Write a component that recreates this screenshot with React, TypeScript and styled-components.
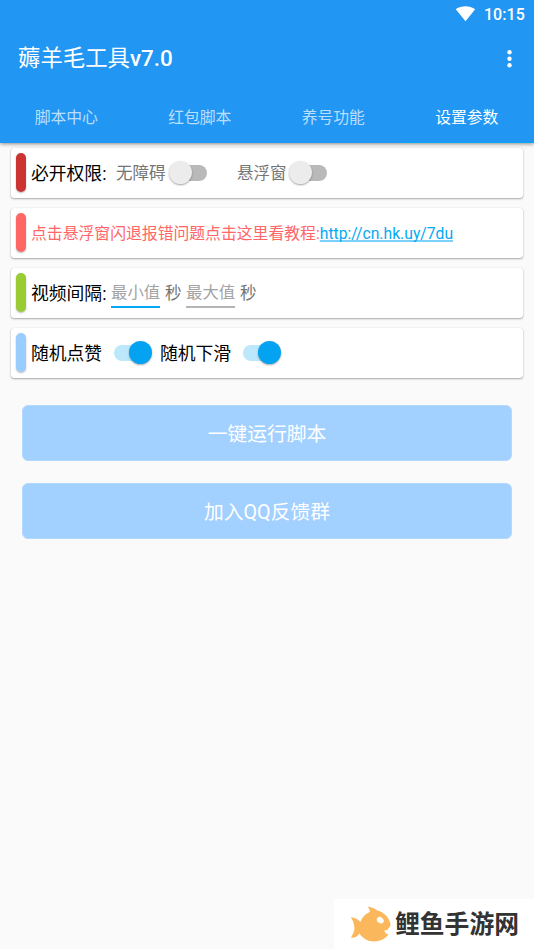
import React from 'react';
import styled, { createGlobalStyle } from 'styled-components';

const GlobalStyle = createGlobalStyle`
  *, *::before, *::after { box-sizing: border-box; }
  body {
    margin: 0;
    background: #fafafa;
    font-family: Roboto, "Noto Sans CJK SC", sans-serif;
  }
`;

const Screen = styled.div`
  position: relative;
  width: 534px;
  height: 949px;
  overflow: hidden;
  background: #fafafa;
`;

const Header = styled.header`
  position: relative;
  height: 143px;
  background: #2196f3;
  color: #fff;
  box-shadow: 0 1px 4px rgba(0, 0, 0, 0.45);
`;

const StatusBar = styled.div`
  display: flex;
  justify-content: flex-end;
  align-items: center;
  height: 27px;
  padding-right: 9px;
  gap: 8px;
`;

const Clock = styled.span`
  font-size: 16px;
  font-weight: 500;
  line-height: 20px;
  letter-spacing: 0.1px;
  padding-top: 2px;
`;

const Toolbar = styled.div`
  display: flex;
  justify-content: space-between;
  align-items: center;
  height: 63px;
  padding: 0 22px 0 18px;
`;

const Title = styled.h1`
  margin: 0;
  padding-bottom: 1px;
  font-size: 22.4px;
  font-weight: 500;
  line-height: 30px;
`;

const TitleText = styled.span`
  font-weight: 400;
`;

const TabBar = styled.nav`
  display: grid;
  grid-template-columns: repeat(4, 1fr);
  height: 53px;
`;

const Tab = styled.button<{ $active?: boolean }>`
  border: 0;
  border-bottom: 1px solid ${p => (p.$active ? '#03a9f4' : 'transparent')};
  padding: 3px 1px 0 0;
  background: none;
  font: 400 15.8px/24px Roboto, "Noto Sans CJK SC", sans-serif;
  color: ${p => (p.$active ? '#fff' : 'rgba(255, 255, 255, 0.7)')};
`;

const CardList = styled.main`
  display: flex;
  flex-direction: column;
  gap: 10px;
  padding: 5px 11px 0;
`;

const Card = styled.section`
  display: flex;
  align-items: center;
  height: 50px;
  padding-left: 5px;
  border-radius: 3px;
  background: #fff;
  box-shadow: 0 1px 2px rgba(0, 0, 0, 0.32), 0 0 1px rgba(0, 0, 0, 0.16);
`;

const Marker = styled.span<{ $color: string }>`
  width: 10px;
  height: 39px;
  margin: 0 5px 1px 0;
  border-radius: 5px;
  background: ${p => p.$color};
  box-shadow: 0 1px 2px rgba(0, 0, 0, 0.28);
`;

const Label = styled.span<{ $width: number }>`
  width: ${p => p.$width}px;
  padding-top: 1px;
  font-size: 17.8px;
  line-height: 27px;
  white-space: nowrap;
  color: #000;
`;

const Muted = styled.span<{ $width: number }>`
  width: ${p => p.$width}px;
  padding-top: 2px;
  font-size: 16.5px;
  line-height: 24px;
  white-space: nowrap;
  color: #757575;
`;

const Notice = styled.p`
  margin: 0;
  padding-top: 1px;
  font-size: 15.83px;
  line-height: 24px;
  white-space: nowrap;
  color: #ff6666;
`;

const NoticeLink = styled.a`
  color: #03a9f4;
  font-size: 15.7px;
  text-decoration: underline;
  text-decoration-color: #7dd0f7;
  text-decoration-thickness: 2px;
  text-underline-offset: 1px;
  text-decoration-skip-ink: none;
`;

const Track = styled.span<{ $on?: boolean; $gap: number }>`
  display: flex;
  align-items: center;
  justify-content: ${p => (p.$on ? 'flex-end' : 'flex-start')};
  width: 37px;
  height: 16px;
  margin: 0 ${p => p.$gap}px 1px 0;
  border-radius: 8px;
  background: ${p => (p.$on ? '#bde8fc' : '#b9b9b9')};
`;

const Thumb = styled.span<{ $on?: boolean }>`
  flex: none;
  width: 23px;
  height: 23px;
  margin: 0 ${p => (p.$on ? '-0.5px' : '-1px')};
  border-radius: 50%;
  background: ${p => (p.$on ? '#03a3f2' : '#ececec')};
  box-shadow: 0 1px 2px rgba(0, 0, 0, 0.35);
`;

const Field = styled.input<{ $focused?: boolean }>`
  width: 49px;
  height: 30px;
  margin: 0 5px 0 0;
  padding: 1px 0 0;
  border: 0;
  border-bottom: ${p => (p.$focused ? '2px solid #03a9f4' : '2px solid #b5b5b5')};
  outline: 0;
  background: none;
  font: 400 16.4px/25px Roboto, "Noto Sans CJK SC", sans-serif;
  &::placeholder { color: #a3a3a3; opacity: 1; }
`;

const Actions = styled.div`
  display: flex;
  flex-direction: column;
  gap: 22px;
  padding: 27px 22px 0;
`;

const ActionButton = styled.button`
  height: 56px;
  padding: 4px 0 0;
  border: 1px solid #b4d9ff;
  border-radius: 6px;
  background: #a2d0ff;
  color: #fff;
  font: 400 19.8px/28px Roboto, "Noto Sans CJK SC", sans-serif;
`;

const Watermark = styled.aside`
  position: absolute;
  right: 0;
  bottom: 0;
  display: flex;
  align-items: center;
  width: 200px;
  height: 50px;
  padding-left: 16px;
  gap: 3px;
  background: #fff;
`;

const Brand = styled.span`
  margin-top: -5px;
  font: 700 24.8px/36px "Noto Sans CJK SC", sans-serif;
  color: #333;
  white-space: nowrap;
`;

const WifiIcon = () => (
  <svg width="20" height="16" viewBox="0.5 0.5 20 16">
    <path d="M.3 3.7C5.9-.2 14.1-.2 19.7 3.7L10 15.7Z" fill="#fff" />
  </svg>
);

const MoreIcon = () => (
  <svg width="5" height="18" viewBox="0 0 5 18" fill="#fff">
    <circle cx="2.5" cy="2.2" r="2.2" />
    <circle cx="2.5" cy="8.7" r="2.2" />
    <circle cx="2.5" cy="15.2" r="2.2" />
  </svg>
);

const FishLogo = () => (
  <svg width="42" height="36" viewBox="0 0 42 36">
    <path
      d="M17.5.5C23 1.5 25 3 27.5 4.5C34 6 40 12 40.7 19.5L37 24.2L40 25.2C38 31.5 31 35.5 24 35.5C17.5 35.5 12.5 32 9.5 27.5C7.5 30.5 4.5 32 1 31.7C3 28 4.3 25.5 4.5 22C4 17 2.8 14 .8 11.2C5.5 11.5 8.5 13.7 10.4 16C12 11.5 15 8 20 5.7C19.8 4 19 2.3 17.5.5Z"
      fill="#fbb75c"
    />
    <path d="M41.2 22.8C39.5 24.3 37 24.5 34.3 24.2C34.8 27 37 28.6 39.3 28.2L42 24Z" fill="#fff" />
    <ellipse cx="30.3" cy="14.2" rx="3.7" ry="2.9" transform="rotate(38 30.3 14.2)" fill="#fff" />
  </svg>
);

const Switch = ({ on, gap = 0 }: { on?: boolean; gap?: number }) => (
  <Track $on={on} $gap={gap} role="switch" aria-checked={!!on}>
    <Thumb $on={on} />
  </Track>
);

const tabs = ['脚本中心', '红包脚本', '养号功能', '设置参数'];

export default function App() {
  return (
    <Screen>
      <GlobalStyle />
      <Header>
        <StatusBar>
          <WifiIcon />
          <Clock>10:15</Clock>
        </StatusBar>
        <Toolbar>
          <Title><TitleText>薅羊毛工具</TitleText>v7.0</Title>
          <MoreIcon />
        </Toolbar>
        <TabBar>
          {tabs.map(t => <Tab key={t} $active={t === '设置参数'}>{t}</Tab>)}
        </TabBar>
      </Header>
      <CardList>
        <Card>
          <Marker $color="#cc3333" />
          <Label $width={85}>必开权限:</Label>
          <Muted $width={54}>无障碍</Muted>
          <Switch gap={30} />
          <Muted $width={53}>悬浮窗</Muted>
          <Switch />
        </Card>
        <Card>
          <Marker $color="#ff6666" />
          <Notice>
            点击悬浮窗闪退报错问题点击这里看教程:<NoticeLink>http://cn.hk.uy/7du</NoticeLink>
          </Notice>
        </Card>
        <Card>
          <Marker $color="#99cc33" />
          <Label $width={80}>视频间隔:</Label>
          <Field $focused placeholder="最小值" />
          <Muted $width={21}>秒</Muted>
          <Field placeholder="最大值" />
          <Muted $width={21}>秒</Muted>
        </Card>
        <Card>
          <Marker $color="#99ccff" />
          <Label $width={83}>随机点赞</Label>
          <Switch on gap={9} />
          <Label $width={83}>随机下滑</Label>
          <Switch on />
        </Card>
      </CardList>
      <Actions>
        <ActionButton>一键运行脚本</ActionButton>
        <ActionButton>加入QQ反馈群</ActionButton>
      </Actions>
      <Watermark>
        <FishLogo />
        <Brand>鲤鱼手游网</Brand>
      </Watermark>
    </Screen>
  );
}
